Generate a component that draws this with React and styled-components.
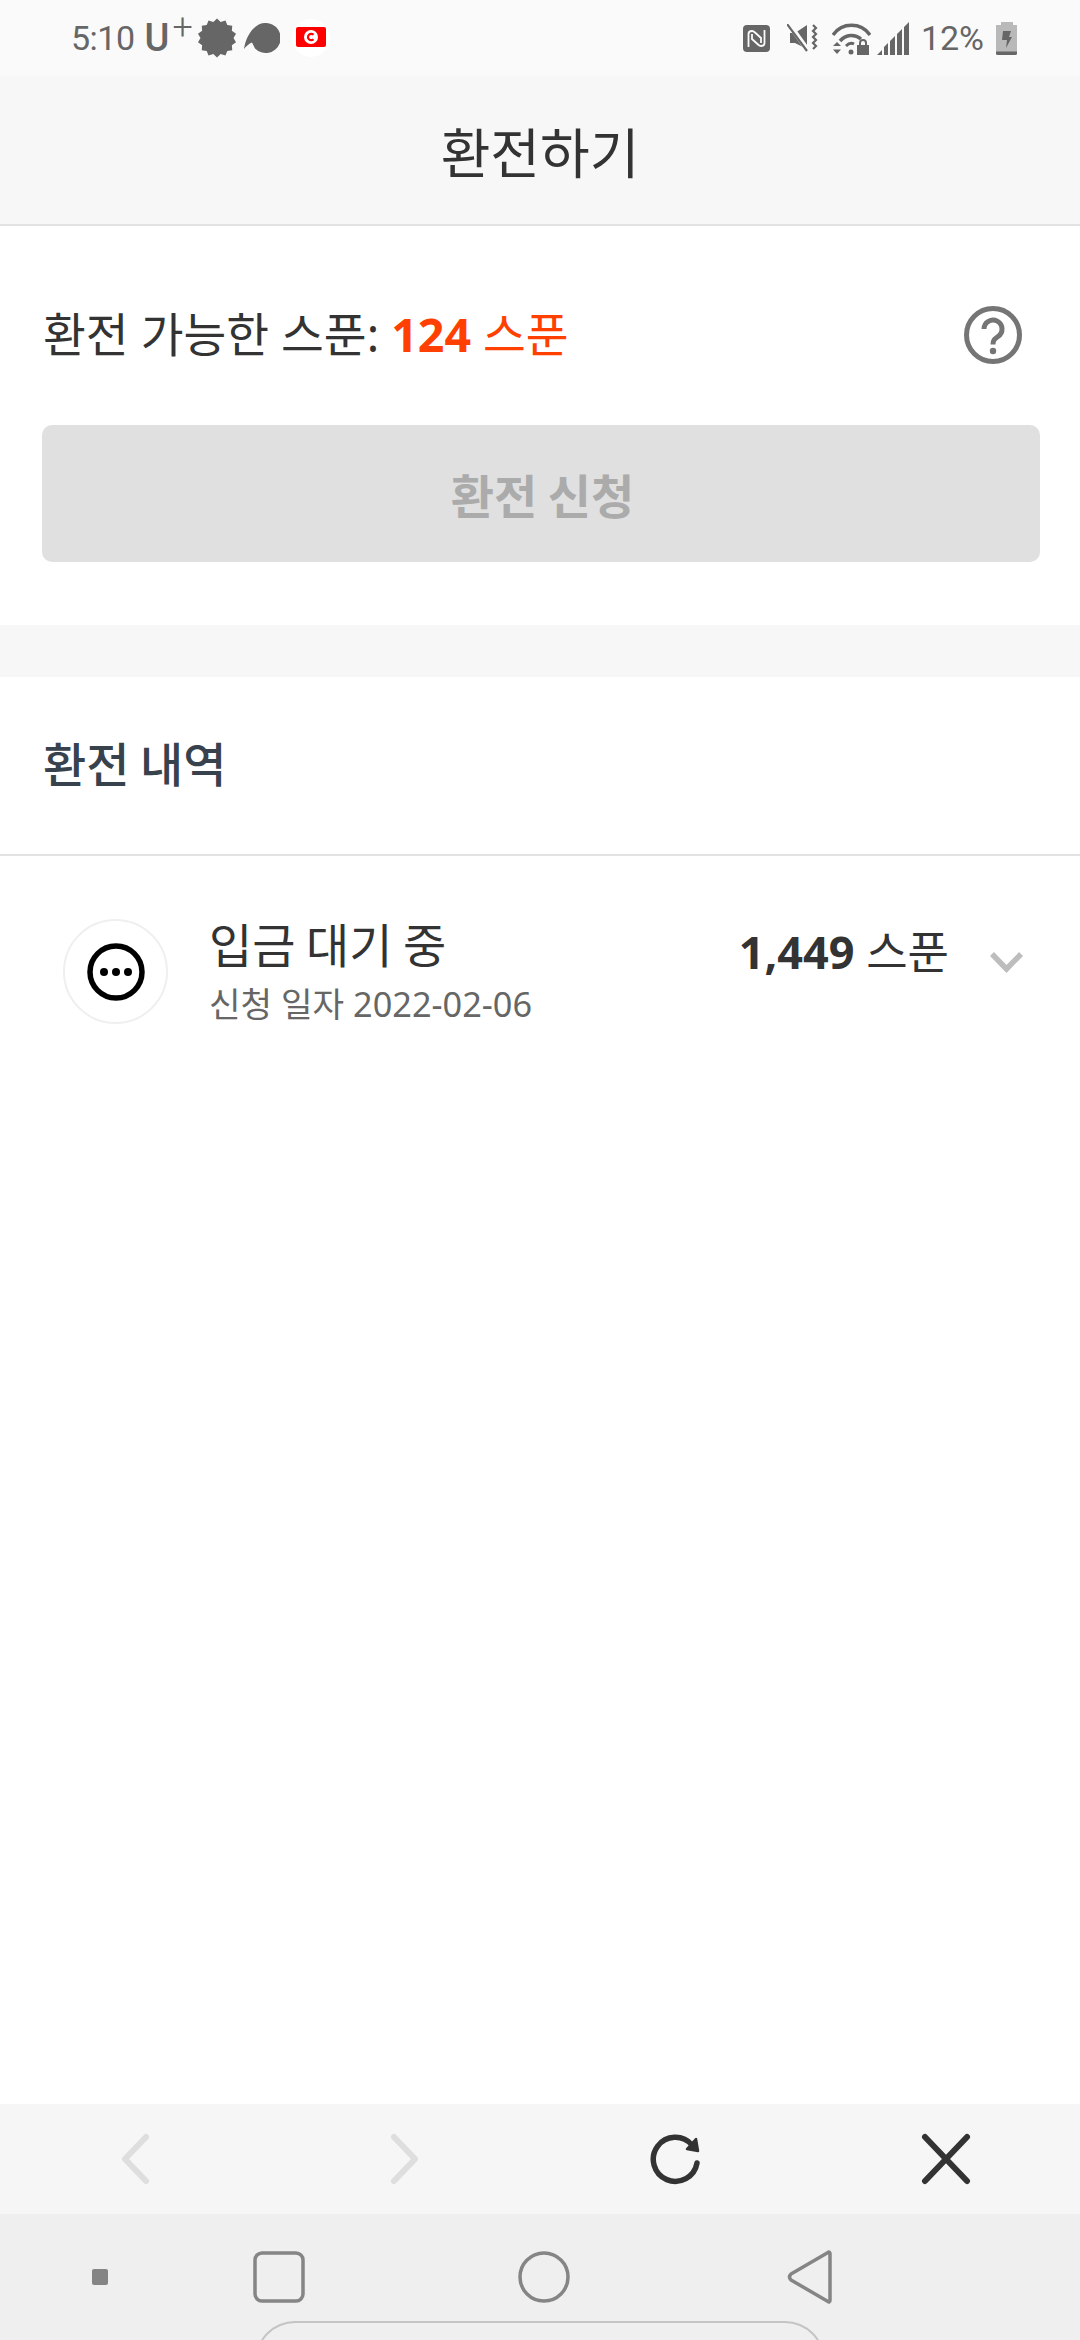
import React from "react";
import styled, { createGlobalStyle } from "styled-components";

const GlobalStyle = createGlobalStyle`
  html, body {
    margin: 0;
    padding: 0;
    background: #fff;
  }
  body {
    font-family: "Noto Sans", "Noto Sans CJK KR", sans-serif;
  }
`;

const Page = styled.div`
  width: 1080px;
  height: 2340px;
  display: flex;
  flex-direction: column;
  overflow: hidden;
  background: #fff;
`;

const StatusBar = styled.div`
  height: 76px;
  flex: none;
  background: #fafafa;
  display: flex;
  align-items: center;
  justify-content: space-between;
  padding: 0 63px 0 71px;
  font-family: Roboto, sans-serif;
  color: #666;
`;

const StatusGroup = styled.div`
  display: flex;
  align-items: center;
`;

const StatusIcon = styled.svg`
  flex: none;
  margin-right: ${(p) => p.$after || 0}px;
`;

const Clock = styled.span`
  font-size: 34px;
  letter-spacing: -0.5px;
  margin-right: 10px;
  line-height: 76px;
`;

const Carrier = styled.span`
  font-size: 38px;
  font-weight: 500;
  line-height: 76px;
  position: relative;
  width: 52px;
  sup {
    position: absolute;
    left: 28px;
    top: -11px;
    font-size: 36px;
    font-weight: 300;
    line-height: 76px;
    vertical-align: baseline;
  }
`;

const Battery = styled.span`
  font-size: 34px;
  margin: 0 12px 0 11px;
`;

const Header = styled.header`
  height: 150px;
  box-sizing: border-box;
  flex: none;
  background: #f7f7f7;
  border-bottom: 2px solid #e2e2e2;
  display: flex;
  align-items: center;
  justify-content: center;
`;

const Title = styled.h1`
  margin: 0;
  font-family: "Noto Sans CJK KR", sans-serif;
  font-size: 54px;
  font-weight: 400;
  color: #333;
`;

const Summary = styled.section`
  padding: 0 40px 0 42px;
  height: 451px;
  flex: none;
  box-sizing: border-box;
  border-bottom: 52px solid #f7f7f7;
`;

const BalanceRow = styled.div`
  height: 199px;
  box-sizing: border-box;
  display: flex;
  align-items: center;
  justify-content: space-between;
  padding: 18px 18px 0 1px;
`;

const BalanceLabel = styled.div`
  font-family: "Noto Sans", "Noto Sans CJK KR", sans-serif;
  font-size: 46.5px;
  color: #333;
  margin-top: -6px;
  b {
    color: #ff4000;
    font-weight: 700;
  }
  span {
    color: #ff4000;
  }
`;

const ApplyButton = styled.button`
  width: 998px;
  height: 137px;
  border: 0;
  border-radius: 10px;
  background: #e0e0e0;
  color: #ababab;
  font-family: "Noto Sans CJK KR", sans-serif;
  font-size: 47px;
  font-weight: 700;
  padding: 0 0 0 3px;
`;

const HistoryHeading = styled.h2`
  margin: 0;
  height: 179px;
  flex: none;
  box-sizing: border-box;
  border-bottom: 2px solid #e2e2e2;
  padding: 0 43px 8px;
  display: flex;
  align-items: center;
  font-family: "Noto Sans CJK KR", sans-serif;
  font-size: 47px;
  font-weight: 500;
  color: #37424d;
`;

const HistoryItem = styled.div`
  display: flex;
  align-items: flex-start;
  padding: 63px 56px 0 63px;
  flex: 1;
`;

const Avatar = styled.div`
  width: 105px;
  height: 105px;
  flex: none;
  box-sizing: border-box;
  border: 2px solid #efefef;
  border-radius: 50%;
  display: flex;
  align-items: center;
  justify-content: center;
`;

const ItemText = styled.div`
  margin-left: 41px;
  flex: 1;
`;

const ItemTitle = styled.div`
  font-family: "Noto Sans CJK KR", sans-serif;
  font-size: 47px;
  line-height: 58px;
  color: #333;
  margin-top: -5px;
`;

const ItemDate = styled.div`
  font-family: "Noto Sans", "Noto Sans CJK KR", sans-serif;
  font-size: 34.3px;
  line-height: 46px;
  color: #666;
  margin-top: 9px;
`;

const Amount = styled.div`
  font-family: "Noto Sans", "Noto Sans CJK KR", sans-serif;
  font-size: 45px;
  line-height: 58px;
  color: #333;
  margin-top: 4px;
  b {
    font-weight: 700;
  }
`;

const Chevron = styled.svg`
  margin: 32px 0 0 40px;
  flex: none;
`;

const Toolbar = styled.div`
  height: 110px;
  flex: none;
  background: #f6f6f6;
  display: grid;
  grid-template-columns: repeat(4, 270px);
  align-items: center;
  justify-items: center;
`;

const NavBar = styled.nav`
  height: 126px;
  flex: none;
  background: #efefef;
  overflow: hidden;
`;

const NavIcons = styled.div`
  height: 107px;
  box-sizing: border-box;
  display: grid;
  grid-template-columns: 200px 158px 372px 160px;
  align-items: center;
  justify-items: center;
  padding-top: 19px;
`;

const GestureHandle = styled.div`
  width: 570px;
  height: 40px;
  margin-left: 255px;
  box-sizing: border-box;
  border: 2px solid #c4c4c4;
  border-bottom: 0;
  border-radius: 40px 40px 0 0;
`;

const burstPoints = () => {
  const pts = [];
  for (let i = 0; i < 28; i++) {
    const r = i % 2 ? 16.5 : 19.5;
    const a = (i * Math.PI) / 14;
    pts.push(`${(20 + r * Math.sin(a)).toFixed(2)},${(20 - r * Math.cos(a)).toFixed(2)}`);
  }
  return pts.join(" ");
};

const NotificationIcons = () => (
  <StatusGroup>
    <StatusIcon $after={7} width="40" height="40" viewBox="0 0 40 40">
      <polygon points={burstPoints()} fill="#666" />
    </StatusIcon>
    <StatusIcon $after={12} width="36" height="30" viewBox="0 0 36 30">
      <path d="M0 26C2 12 11 0 21 0a15 15 0 1 1-10 25.500c-1-2-2-4-3-6-3 1-6 4-8 6.500z" fill="#666" />
    </StatusIcon>
    <StatusIcon width="38" height="40" viewBox="0 0 38 40">
      <circle cx="19" cy="20" r="19" fill="#fff" />
      <rect x="4" y="9" width="30" height="20" rx="2" fill="#f00" />
      <circle cx="19" cy="19" r="7" fill="#fff" />
      <path d="M21.500 16.800a3.200 3.200 0 1 0 0 4.400" fill="none" stroke="#f00" strokeWidth="2.200" />
    </StatusIcon>
  </StatusGroup>
);

const SystemIcons = () => (
  <StatusGroup>
    <StatusIcon $after={16} width="28" height="27" viewBox="0 0 28 27">
      <rect width="27" height="27" rx="4" fill="#666" />
      <path d="M5.500 22V9c0-2 1.500-3 3.500-3 1 0 2 .5 3 1.500L18 13v5" fill="none" stroke="#fafafa" strokeWidth="1.800" />
      <path d="M21.500 5v13c0 2-1.500 3-3.500 3-1 0-2-.5-3-1.500L9 14V9" fill="none" stroke="#fafafa" strokeWidth="1.800" />
    </StatusIcon>
    <StatusIcon $after={13} width="32" height="28" viewBox="0 0 32 28">
      <path d="M3 9h5L20 1v24L8 19H3z" fill="#666" />
      <path d="M2 0l20 28" stroke="#fafafa" strokeWidth="5" />
      <path d="M0 0l20 27" stroke="#666" strokeWidth="2.200" />
      <path d="M26 1l3 3-3 3 3 3-3 3 3 3-3 3 3 3-3 3" fill="none" stroke="#666" strokeWidth="2.200" />
    </StatusIcon>
    <StatusIcon $after={6} width="39" height="33" viewBox="0 0 39 33">
      <path d="M1 13C10 0 29 0 38 13" fill="none" stroke="#666" strokeWidth="3.500" />
      <path d="M8 19c6-7 15-7 21-2" fill="none" stroke="#666" strokeWidth="3.500" />
      <path d="M14 24c3-3 6-3 8-2" fill="none" stroke="#666" strokeWidth="3" />
      <circle cx="19" cy="30" r="2.500" fill="#666" />
      <path d="M1 24l4-4 4 4zM1 27.500l4 4.500 4-4.500z" fill="#666" />
      <rect x="25" y="23" width="12" height="10" fill="#666" />
      <path d="M28 23v-2a3 3 0 0 1 6 0v2" fill="none" stroke="#666" strokeWidth="2" />
    </StatusIcon>
    <StatusIcon width="33" height="33" viewBox="0 0 33 33">
      <path d="M0 33l5-5v5zM7 33v-8l4-4v12zM13 33V19l5-5v19zM20 33V12l5-5v26zM27 33V5l5-5v33z" fill="#666" />
    </StatusIcon>
    <Battery>12%</Battery>
    <StatusIcon width="21" height="33" viewBox="0 0 21 33">
      <path d="M5 0h12v3h4v30H0V3h5z" fill="#b9b9b9" />
      <path d="M0 29.500h21V31a2 2 0 0 1-2 2H2a2 2 0 0 1-2-2z" fill="#666" />
      <path d="M7 9h8l-2 6h3l-6 11 1-8H6z" fill="#666" />
    </StatusIcon>
  </StatusGroup>
);

const HelpIcon = () => (
  <svg width="58" height="58" viewBox="0 0 58 58">
    <circle cx="29" cy="29" r="26.500" fill="none" stroke="#757575" strokeWidth="5" />
    <path d="M20 23a9 9 0 1 1 14 7.500c-3 2-5 3.500-5 8" fill="none" stroke="#757575" strokeWidth="5" />
    <circle cx="29" cy="45" r="3.200" fill="#757575" />
  </svg>
);

const PendingIcon = () => (
  <svg width="58" height="58" viewBox="0 0 58 58">
    <circle cx="29" cy="29" r="26" fill="none" stroke="#000" strokeWidth="5.500" />
    <circle cx="17" cy="29" r="4" />
    <circle cx="29" cy="29" r="4" />
    <circle cx="41" cy="29" r="4" />
  </svg>
);

const ToolIcon = ({ d, color }) => (
  <svg width="52" height="52" viewBox="0 0 52 52">
    <path d={d} fill="none" stroke={color} strokeWidth="6" strokeLinecap="round" strokeLinejoin="round" />
  </svg>
);

const RefreshIcon = () => (
  <svg width="52" height="52" viewBox="0 0 52 52">
    <path d="M48 30A22 22 0 1 1 43 12" fill="none" stroke="#333" strokeWidth="5.500" strokeLinecap="round" />
    <path d="M47 6l2 12-11-2z" fill="#333" stroke="#333" strokeWidth="2.500" strokeLinejoin="round" />
  </svg>
);

const App = () => {
  return (
    <Page>
      <GlobalStyle />
      <StatusBar>
        <StatusGroup>
          <Clock>5:10</Clock>
          <Carrier>
            U<sup>+</sup>
          </Carrier>
          <NotificationIcons />
        </StatusGroup>
        <SystemIcons />
      </StatusBar>
      <Header>
        <Title>환전하기</Title>
      </Header>
      <Summary>
        <BalanceRow>
          <BalanceLabel>
            환전 가능한 스푼: <b>124</b> <span>스푼</span>
          </BalanceLabel>
          <HelpIcon />
        </BalanceRow>
        <ApplyButton disabled>환전 신청</ApplyButton>
      </Summary>
      <HistoryHeading>환전 내역</HistoryHeading>
      <HistoryItem>
        <Avatar>
          <PendingIcon />
        </Avatar>
        <ItemText>
          <ItemTitle>입금 대기 중</ItemTitle>
          <ItemDate>신청 일자 2022-02-06</ItemDate>
        </ItemText>
        <Amount>
          <b>1,449</b> 스푼
        </Amount>
        <Chevron width="35" height="22" viewBox="0 0 35 22">
          <path d="M3 3l14.500 15L32 3" fill="none" stroke="#bdbdbd" strokeWidth="5.500" />
        </Chevron>
      </HistoryItem>
      <Toolbar>
        <ToolIcon d="M37 4L16 26l21 22" color="#dedede" />
        <ToolIcon d="M15 4l21 22-21 22" color="#dedede" />
        <RefreshIcon />
        <ToolIcon d="M6 4l42 44M48 4L6 48" color="#333" />
      </Toolbar>
      <NavBar>
        <NavIcons>
          <svg width="16" height="16" viewBox="0 0 16 16">
            <rect width="16" height="16" rx="2" fill="#858585" />
          </svg>
          <svg width="52" height="52" viewBox="0 0 52 52">
            <rect x="2" y="2" width="48" height="48" rx="7" fill="none" stroke="#858585" strokeWidth="3.500" />
          </svg>
          <svg width="52" height="52" viewBox="0 0 52 52">
            <circle cx="26" cy="26" r="24" fill="none" stroke="#858585" strokeWidth="3.500" />
          </svg>
          <svg width="46" height="54" viewBox="0 0 46 54">
            <path d="M43 3.500v47c0 1-1 2-2 1L4 30c-2-2-2-4 0-6L41 2.500c1-1 2 0 2 1z" fill="none" stroke="#858585" strokeWidth="3.500" strokeLinejoin="round" />
          </svg>
        </NavIcons>
        <GestureHandle />
      </NavBar>
    </Page>
  );
};

export default App;
